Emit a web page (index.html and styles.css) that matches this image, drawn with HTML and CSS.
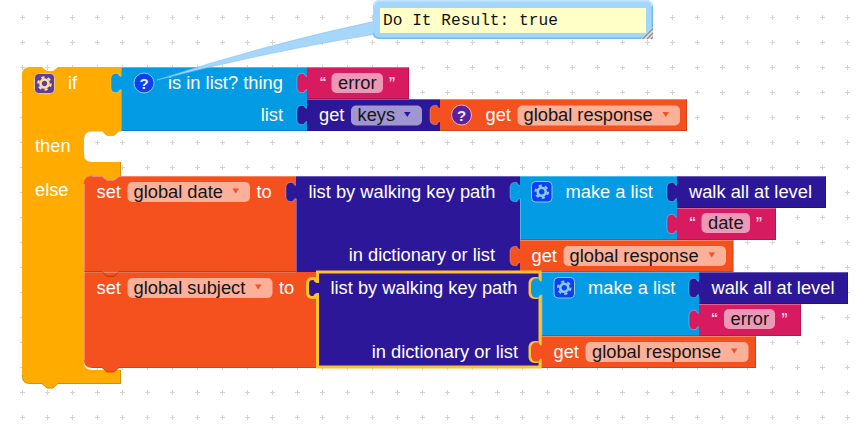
FILE: index.html
```html
<!DOCTYPE html>
<html lang="en">
<head>
<meta charset="utf-8">
<title>Blocks workspace</title>
<link rel="stylesheet" href="styles.css">
</head>
<body>
<svg class="canvas" width="868" height="426" viewBox="0 0 868 426" xmlns="http://www.w3.org/2000/svg">
<defs>
<pattern id="grid" x="10" y="5" width="25" height="25" patternUnits="userSpaceOnUse">
<path class="plus" d="M10 12.5h5M12.500 10v5"/>
</pattern>
<path id="tab" class="hil" d="M0 6.500c-1 0-2.500 1-3 3c-4 .5-7-.5-7-5.500v-8c0-5 3-6 7-5.500c.5 2 2 3 3 3"/>
<g id="gear">
<circle class="gear-ring" r="4"/>
<circle class="gear-teeth" r="6.200" pathLength="24"/>
</g>
</defs>
<rect class="grid" width="868" height="426"/>

<!-- if block -->
<path class="b yellow" d="M22 75Q22 67 30 67H42l5 4h6l5-4H121V131h-2l-5 4.500h-7l-5-4.500H92Q84 131 84 139V154Q84 162 92 162H121V176h-2l-5 4.500h-7l-5-4.500H92Q84 176 84 184V362Q84 370 92 370H121V384H58l-5 4.500h-6l-5-4.500H30Q22 384 22 376Z"/>
<path class="lo" d="M22 375Q22 383.500 30 383.500H42l5 4.500h6l5-4.500H120.500V370"/>
<path class="lo" d="M84 184Q84 176 92 176M84 139Q84 131.500 92 131.500H102l5 4h7l5-4h2M120.500 162V176"/>
<rect class="icon-purple" x="34.500" y="73.500" width="20" height="20" rx="4"/>
<use href="#gear" x="44.500" y="83.500" class="gear-y"/>
<text class="t w" x="68" y="89">if</text>
<text class="t w" x="35" y="152">then</text>
<text class="t w" x="35" y="196">else</text>

<!-- is in list -->
<path class="b blue" d="M121 67H307V131H121V89.500c-1 0-2.500 1-3 3c-4 .5-7-.5-7-5.500v-8c0-5 3-6 7-5.500c.5 2 2 3 3 3Z"/>
<use href="#tab" x="121" y="83"/>
<path class="hi" d="M121 67.500H307"/><path class="lo" d="M121 130.500H307"/><path class="hil" d="M121.500 76.500V67M121.500 89.500V131"/>
<circle class="q-blue" cx="144" cy="83" r="10"/>
<text class="q" x="144" y="88.500">?</text>
<text class="t w" x="168" y="89">is in list? thing</text>
<text class="t w e" x="283" y="121">list</text>

<path class="b pink" d="M307 67H409V99H307V89.500c-1 0-2.500 1-3 3c-4 .5-7-.5-7-5.500v-8c0-5 3-6 7-5.500c.5 2 2 3 3 3Z"/>
<use href="#tab" x="307" y="83"/>
<path class="hi" d="M307 67.500H409"/><path class="lo" d="M307 98.500H408.500V67"/>
<text class="qt" x="319.500" y="87">“</text>
<rect class="f" x="331.500" y="73" width="51.500" height="20" rx="5"/>
<text class="t k" x="338" y="89">error</text>
<text class="qt" x="388.500" y="87">”</text>

<path class="b dict" d="M307 99H440V131H307V121.500c-1 0-2.500 1-3 3c-4 .5-7-.5-7-5.500v-8c0-5 3-6 7-5.500c.5 2 2 3 3 3Z"/>
<use href="#tab" x="307" y="115"/>
<path class="hi" d="M307 99.500H440"/><path class="lo" d="M307 130.500H440"/>
<text class="t w" x="319" y="121">get</text>
<rect class="f" x="351" y="105.500" width="71" height="20" rx="5"/>
<text class="t k" x="357.500" y="121">keys</text>
<path class="arr-d" d="M404 112h6.500l-3.250 5Z"/>

<path class="b orange" d="M440 99H687V131H440V121.500c-1 0-2.500 1-3 3c-4 .5-7-.5-7-5.500v-8c0-5 3-6 7-5.500c.5 2 2 3 3 3Z"/>
<use href="#tab" x="440" y="115"/>
<path class="hi" d="M440 99.500H687"/><path class="lo" d="M440 130.500H686.500V99"/>
<circle class="q-purple" cx="461.500" cy="115" r="10"/>
<text class="q" x="461.500" y="120.500">?</text>
<text class="t w" x="485.500" y="121">get</text>
<rect class="f" x="517.500" y="105.500" width="162.500" height="20" rx="5"/>
<text class="t k" x="523.500" y="121">global response</text>
<path class="arr-o" d="M662.500 112h6.500l-3.250 5Z"/>

<!-- set global date -->
<path class="b orange" d="M84 184Q84 176 92 176H102l5 4h7l5-4H296V272H84Z"/>
<path class="hi" d="M92 176.500H102l5 4h7l5-4H296M84.500 184V272"/>
<text class="t w" x="96.500" y="198">set</text>
<rect class="f" x="127.500" y="182" width="122.500" height="20" rx="5"/>
<text class="t k" x="133.500" y="198">global date</text>
<path class="arr-o" d="M232.500 188.500h6.500l-3.250 5Z"/>
<text class="t w" x="256.500" y="198">to</text>

<path class="b dict" d="M296 176H520V272H296V198.500c-1 0-2.500 1-3 3c-4 .5-7-.5-7-5.500v-8c0-5 3-6 7-5.500c.5 2 2 3 3 3Z"/>
<use href="#tab" x="296" y="192"/>
<path class="hi" d="M296 176.500H520M296.500 198.500V272"/>
<text class="t w" x="308.500" y="198">list by walking key path</text>
<text class="t w e" x="495" y="261">in dictionary or list</text>

<path class="b blue" d="M520 176H677V240H520V198.500c-1 0-2.500 1-3 3c-4 .5-7-.5-7-5.500v-8c0-5 3-6 7-5.500c.5 2 2 3 3 3Z"/>
<use href="#tab" x="520" y="192"/>
<path class="hi" d="M520 176.500H677"/><path class="lo" d="M520 239.500H677"/><path class="hil" d="M520.500 198.500V240"/>
<rect class="icon-blue" x="531.500" y="181.500" width="20.500" height="20.500" rx="4"/>
<use href="#gear" x="541.750" y="191.750" class="gear-b"/>
<text class="t w" x="565.500" y="198">make a list</text>

<path class="b dict" d="M677 176H826V208H677V198.500c-1 0-2.500 1-3 3c-4 .5-7-.5-7-5.500v-8c0-5 3-6 7-5.500c.5 2 2 3 3 3Z"/>
<use href="#tab" x="677" y="192"/>
<path class="hi" d="M677 176.500H826"/><path class="lo" d="M677 207.500H825.500V176"/>
<text class="t w" x="689" y="198">walk all at level</text>

<path class="b pink" d="M677 208H776V240H677V230.500c-1 0-2.500 1-3 3c-4 .5-7-.5-7-5.500v-8c0-5 3-6 7-5.500c.5 2 2 3 3 3Z"/>
<use href="#tab" x="677" y="224"/>
<path class="hi" d="M677 208.500H776"/><path class="lo" d="M677 239.500H775.500V208"/>
<text class="qt" x="689" y="227">“</text>
<rect class="f" x="701.500" y="213" width="48.500" height="20" rx="5"/>
<text class="t k" x="708" y="229">date</text>
<text class="qt" x="755.500" y="227">”</text>

<path class="b orange" d="M520 240H733.500V272H520V262.500c-1 0-2.500 1-3 3c-4 .5-7-.5-7-5.500v-8c0-5 3-6 7-5.500c.5 2 2 3 3 3Z"/>
<use href="#tab" x="520" y="256"/>
<path class="hi" d="M520 240.500H733.500"/><path class="lo" d="M520 271.500H733V240"/>
<text class="t w" x="531.500" y="261.500">get</text>
<rect class="f" x="563.500" y="246" width="162.500" height="20" rx="5"/>
<text class="t k" x="569.500" y="261.500">global response</text>
<path class="arr-o" d="M708.500 252.500h6.500l-3.250 5Z"/>

<!-- set global subject -->
<path class="b orange" d="M84 272H317V368H119l-5 4.500h-7l-5-4.500H92Q84 368 84 360Z"/>
<path class="hi" d="M84 272.500H296"/>
<path class="lo2" d="M84 271.800H102l5 4.500h7l5-4.500H296"/>
<path class="hil" d="M84.500 272V360"/>
<path class="lo" d="M92 367.500H102l5 4.500h7l5-4.500H317"/>
<text class="t w" x="96.500" y="294">set</text>
<rect class="f" x="127.500" y="278" width="145" height="20" rx="5"/>
<text class="t k" x="133.500" y="294">global subject</text>
<path class="arr-o" d="M255 284.500h6.500l-3.250 5Z"/>
<text class="t w" x="279" y="294">to</text>

<path class="b dict" d="M317.500 272H540V367H317.500V294.500c-1 0-2.500 1-3 3c-4 .5-7-.5-7-5.500v-8c0-5 3-6 7-5.500c.5 2 2 3 3 3Z"/>
<path class="select" d="M317.500 272H540V281.500c-1 0-2.500-1-3-3c-4-.5-7 .5-7 5.500v8c0 5 3 6 7 5.500c.5-2 2-3 3-3V345.500c-1 0-2.500-1-3-3c-4-.5-7 .5-7 5.500v8c0 5 3 6 7 5.500c.5-2 2-3 3-3V367H317.500V294.500c-1 0-2.500 1-3 3c-4 .5-7-.5-7-5.500v-8c0-5 3-6 7-5.500c.5 2 2 3 3 3Z"/>
<text class="t w" x="330.500" y="294">list by walking key path</text>
<text class="t w e" x="518" y="358">in dictionary or list</text>

<path class="b blue" d="M541.500 272H699V336H541.500V294.500c-1 0-2.500 1-3 3c-4 .5-7-.5-7-5.500v-8c0-5 3-6 7-5.500c.5 2 2 3 3 3Z"/>
<path class="hi" d="M541.500 272.500H699"/><path class="lo" d="M541.500 335.500H699"/><path class="hil" d="M542 294.500V336"/>
<rect class="icon-blue" x="554" y="277.500" width="20.500" height="20.500" rx="4"/>
<use href="#gear" x="564.250" y="287.750" class="gear-b"/>
<text class="t w" x="588" y="294">make a list</text>

<path class="b dict" d="M699 272H848V304H699V294.500c-1 0-2.500 1-3 3c-4 .5-7-.5-7-5.500v-8c0-5 3-6 7-5.500c.5 2 2 3 3 3Z"/>
<use href="#tab" x="699" y="288"/>
<path class="hi" d="M699 272.500H848"/><path class="lo" d="M699 303.500H847.500V272"/>
<text class="t w" x="711.500" y="294">walk all at level</text>

<path class="b pink" d="M699 304H801V336H699V326.500c-1 0-2.500 1-3 3c-4 .5-7-.5-7-5.500v-8c0-5 3-6 7-5.500c.5 2 2 3 3 3Z"/>
<use href="#tab" x="699" y="320"/>
<path class="hi" d="M699 304.500H801"/><path class="lo" d="M699 335.500H800.500V304"/>
<text class="qt" x="711" y="323">“</text>
<rect class="f" x="724" y="309" width="51" height="20" rx="5"/>
<text class="t k" x="730.500" y="325">error</text>
<text class="qt" x="781" y="323">”</text>

<path class="b orange" d="M541.500 336H756V368H541.500V358.500c-1 0-2.500 1-3 3c-4 .5-7-.5-7-5.500v-8c0-5 3-6 7-5.500c.5 2 2 3 3 3Z"/>
<path class="hi" d="M541.500 336.500H756"/><path class="lo" d="M541.500 367.500H755.500V336"/>
<text class="t w" x="553.500" y="358">get</text>
<rect class="f" x="585.500" y="342" width="163" height="20" rx="5"/>
<text class="t k" x="592" y="358">global response</text>
<path class="arr-o" d="M731 348.500h6.500l-3.250 5Z"/>

<!-- result bubble -->
<path class="tail" d="M157 80Q265 44.500 376 21V34Q270 51 157 80Z"/>
<rect class="bubble" x="373" y="0" width="280" height="39" rx="6"/>
<path class="bubble-hi" d="M374 6Q374.500 .8 380 .8H646Q651.500 .8 652 6"/>
<path class="bubble-lo" d="M373.500 33Q374 38.300 380 38.300H646Q652.300 38.300 652.300 33V6"/>
<rect class="note" x="380" y="8" width="266" height="25"/>
<path class="grip-bg" d="M641 39L653 27V39Z"/>
<path class="grip" d="M642.500 39L653 28.500M647 39l6-6M651 39l2-2"/>
<text class="result" x="383" y="25">Do It Result: true</text>
</svg>
</body>
</html>
```
FILE: styles.css
```css
html, body { margin: 0; padding: 0; background: #fff; overflow: hidden; }
.canvas { display: block; }
.grid { fill: url(#grid); }
.plus { stroke: #d4d4d4; stroke-width: 1; fill: none; }

.yellow { fill: #ffab00; }
.blue { fill: #049be5; }
.pink { fill: #d81b60; }
.dict { fill: #2d1799; }
.orange { fill: #f4511e; }

.hi { fill: none; stroke: rgba(255,255,255,.3); stroke-width: 1; }
.hil { fill: none; stroke: rgba(255,255,255,.28); stroke-width: 1; }
.lo { fill: none; stroke: rgba(0,0,0,.16); stroke-width: 1; }
.lo2 { fill: none; stroke: rgba(120,30,0,.5); stroke-width: 1; }
.select { fill: none; stroke: #fcc22f; stroke-width: 3; }

.t { font-family: "Liberation Sans", Arial, sans-serif; font-size: 18.3px; }
.w { fill: #fff; }
.k { fill: #151515; }
.e { text-anchor: end; }
.f { fill: rgba(255,255,255,.55); }
.qt { font-family: "Liberation Sans", Arial, sans-serif; font-size: 14px; font-weight: 700; fill: #f9d5e3; }
.q { font-family: "Liberation Sans", Arial, sans-serif; font-size: 15px; font-weight: 700; fill: #e8f0ff; text-anchor: middle; }

.q-blue { fill: #0c40f0; stroke: #8cc8f5; stroke-width: 1; }
.q-purple { fill: #5b1fa0; stroke: #f6b8a8; stroke-width: 1; }
.icon-purple { fill: #5e3d9e; stroke: #e8c98a; stroke-width: 1; }
.icon-blue { fill: #0c40f0; stroke: #8cc8f5; stroke-width: 1; }
.gear-ring { fill: none; stroke-width: 2.6; }
.gear-teeth { fill: none; stroke-width: 2.2; stroke-dasharray: 2 2; }
.gear-y { stroke: #ffe09a; }
.gear-b { stroke: #8cc8ff; }

.arr-o { fill: #f4511e; }
.arr-d { fill: #2d1799; }

.tail { fill: #a6d7fb; stroke: #7cc0f5; stroke-width: .6; }
.bubble { fill: #a3d6fc; }
.bubble-hi { fill: none; stroke: #c4e6ff; stroke-width: 1.5; }
.bubble-lo { fill: none; stroke: #76b8f0; stroke-width: 1.5; }
.note { fill: #ffffc7; }
.grip-bg { fill: #dcdcdc; }
.grip { fill: none; stroke: #8f8f8f; stroke-width: 1.2; }
.result { font-family: "Liberation Mono", "Courier New", monospace; font-size: 16.2px; fill: #111; }
```
